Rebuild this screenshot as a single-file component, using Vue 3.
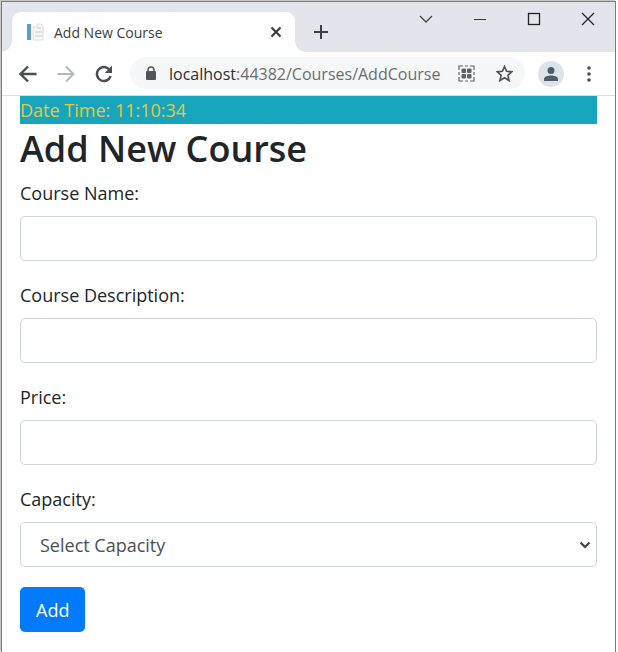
<template>
  <div class="desktop">
    <div class="window">
      <header class="tab-strip">
        <div class="tab">
          <svg class="favicon" width="20" height="18" viewBox="0 0 20 18">
            <rect x="1" y="1" width="4" height="16" fill="#5b9bd0" />
            <path d="M7 4h4V1h4l2 3v13H7z" fill="#f6f7f8" stroke="#dcdfe2" />
            <path d="M9 9h7M9 13h7M11 5h4" stroke="#c6cace" fill="none" />
          </svg>
          <span class="tab-title">Add New Course</span>
          <button class="icon-btn tab-close" type="button" aria-label="Close tab">
            <svg width="12" height="12" viewBox="0 0 12 12">
              <path d="M1.5 1.5l9 9M10.5 1.5l-9 9" stroke="#3c4043" stroke-width="2.2" />
            </svg>
          </button>
        </div>
        <button class="icon-btn new-tab" type="button" aria-label="New tab">
          <svg width="14" height="14" viewBox="0 0 14 14">
            <path d="M7 0v14M0 7h14" stroke="#3c4043" stroke-width="2" />
          </svg>
        </button>
        <div class="window-buttons">
          <button class="icon-btn" type="button" aria-label="Search tabs">
            <svg width="14" height="14" viewBox="0 0 14 14">
              <path d="M1 4l6 6 6-6" stroke="#444" stroke-width="1.3" fill="none" />
            </svg>
          </button>
          <button class="icon-btn" type="button" aria-label="Minimize">
            <svg width="14" height="14" viewBox="0 0 14 14">
              <path d="M1 7.5h12" stroke="#333" />
            </svg>
          </button>
          <button class="icon-btn" type="button" aria-label="Maximize">
            <svg width="14" height="14" viewBox="0 0 14 14">
              <rect x="1.5" y="1.5" width="11" height="11" stroke="#222" stroke-width="1.3" fill="none" />
            </svg>
          </button>
          <button class="icon-btn" type="button" aria-label="Close">
            <svg width="14" height="14" viewBox="0 0 14 14">
              <path d="M1 1l12 12M13 1L1 13" stroke="#222" stroke-width="1.2" />
            </svg>
          </button>
        </div>
      </header>

      <nav class="toolbar">
        <button class="icon-btn" type="button" aria-label="Back">
          <svg width="18" height="18" viewBox="0 0 18 18">
            <path d="M17.5 9H2M9 1.5L1.5 9 9 16.5" stroke="#4a4d51" stroke-width="2.4" fill="none" />
          </svg>
        </button>
        <button class="icon-btn" type="button" aria-label="Forward">
          <svg width="18" height="18" viewBox="0 0 18 18">
            <path d="M.5 9H16M9 1.5L16.5 9 9 16.5" stroke="#b5b8bb" stroke-width="2" fill="none" />
          </svg>
        </button>
        <button class="icon-btn" type="button" aria-label="Reload">
          <svg width="18" height="18" viewBox="0 0 18 18">
            <path d="M15.6 11.2A7 7 0 1 1 14 4.2" stroke="#4a4d51" stroke-width="2.5" fill="none" />
            <path d="M17 .8V8H9.8z" fill="#4a4d51" />
          </svg>
        </button>
        <div class="address-bar">
          <svg class="lock" width="12" height="15" viewBox="0 0 12 15">
            <rect x="1" y="5" width="10" height="9" rx="1" fill="#515458" />
            <path d="M3 6V4a3 3 0 0 1 6 0v2" stroke="#515458" stroke-width="1.5" fill="none" />
          </svg>
          <span class="url"><span class="host">localhost</span>:44382/Courses/AddCourse</span>
          <button class="icon-btn qr" type="button" aria-label="Create QR code">
            <svg width="17" height="17" viewBox="0 0 17 17">
              <path d="M1 5V1h4M12 1h4v4M16 12v4h-4M5 16H1v-4M7 1h3M7 16h3M1 7v3M16 7v3" stroke="#5f6368" stroke-width="1.2" fill="none" />
              <rect x="3.5" y="3.5" width="4.5" height="4.5" rx="1" fill="#5f6368" />
              <rect x="9" y="3.5" width="4.5" height="4.5" rx="1" fill="#5f6368" />
              <rect x="3.5" y="9" width="4.5" height="4.5" rx="1" fill="#5f6368" />
              <rect x="9" y="9" width="4.5" height="4.5" rx="1" fill="#5f6368" />
            </svg>
          </button>
          <button class="icon-btn" type="button" aria-label="Bookmark this page">
            <svg width="17" height="17" viewBox="0 0 17 17">
              <path d="M8.5 1.5l2.1 4.8 5.2.5-3.9 3.5 1.1 5.2-4.5-2.7L4 15.5l1.1-5.2L1.2 6.8l5.2-.5z" stroke="#515458" stroke-width="1.7" fill="none" />
            </svg>
          </button>
        </div>
        <button class="icon-btn avatar" type="button" aria-label="Profile">
          <svg width="16" height="16" viewBox="0 0 16 16">
            <circle cx="8" cy="4.5" r="3.5" fill="#4f5b6d" />
            <path d="M1 15v-2c0-2.5 4-3.5 7-3.5s7 1 7 3.5v2z" fill="#4f5b6d" />
          </svg>
        </button>
        <button class="icon-btn menu" type="button" aria-label="Menu">
          <svg width="4" height="16" viewBox="0 0 4 16">
            <circle cx="2" cy="2" r="1.8" fill="#4a4d51" />
            <circle cx="2" cy="8" r="1.8" fill="#4a4d51" />
            <circle cx="2" cy="14" r="1.8" fill="#4a4d51" />
          </svg>
        </button>
      </nav>

      <main class="page">
        <div class="clock">Date Time: {{ time }}</div>
        <h1>Add New Course</h1>
        <form @submit.prevent>
          <div v-for="field in fields" :key="field.id" class="form-group">
            <label :for="field.id">{{ field.label }}</label>
            <input :id="field.id" v-model="course[field.id]" class="form-control" type="text" />
          </div>
          <div class="form-group">
            <label for="capacity">Capacity:</label>
            <div class="select-wrap">
              <select id="capacity" v-model="course.capacity" class="form-control">
                <option value="">Select Capacity</option>
                <option v-for="n in capacities" :key="n" :value="n">{{ n }}</option>
              </select>
              <svg class="chevron" width="12" height="8" viewBox="0 0 12 8">
                <path d="M1.5 1.5L6 6l4.5-4.5" stroke="#40464c" stroke-width="2.2" fill="none" />
              </svg>
            </div>
          </div>
          <button class="btn-primary" type="submit">Add</button>
        </form>
      </main>
    </div>
  </div>
</template>

<script setup>
import { reactive, ref } from 'vue'

const time = ref('11:10:34')

const fields = [
  { id: 'name', label: 'Course Name:' },
  { id: 'description', label: 'Course Description:' },
  { id: 'price', label: 'Price:' }
]

const capacities = [10, 20, 30]

const course = reactive({
  name: '',
  description: '',
  price: '',
  capacity: ''
})
</script>

<style>
body {
  margin: 0;
  background: #fff;
}
</style>

<style scoped>
* {
  box-sizing: border-box;
}

.desktop {
  min-height: 100vh;
  padding-right: 2px;
  background: #fff;
  display: flex;
  font-family: "Segoe UI", "Open Sans", "Noto Sans", sans-serif;
  font-size: 18px;
  color: #212529;
}

.window {
  flex: 1;
  min-width: 0;
  margin: 1px 0 0 1px;
  background: #fff;
  border: 1px solid #7b7b7b;
  border-bottom: none;
  box-shadow: -1px -1px 0 #c8cac8;
}

.icon-btn {
  display: flex;
  align-items: center;
  justify-content: center;
  flex-shrink: 0;
  padding: 0;
  border: none;
  background: none;
  cursor: pointer;
}

/* tab strip */
.tab-strip {
  display: flex;
  height: 50px;
  padding: 10px 20px 0 10px;
  background: #e2e5eb;
}

.tab {
  position: relative;
  display: flex;
  align-items: center;
  width: 283px;
  padding: 0 13px 0 14px;
  background: #fff;
  border-radius: 9px 9px 0 0;
}

/* curved feet of the active tab */
.tab::before,
.tab::after {
  content: '';
  position: absolute;
  bottom: 0;
  width: 10px;
  height: 10px;
}

.tab::before {
  right: 100%;
  background: radial-gradient(circle at 0 0, transparent 9px, #fff 10px);
}

.tab::after {
  left: 100%;
  background: radial-gradient(circle at 100% 0, transparent 9px, #fff 10px);
}

.tab-title {
  flex: 1;
  margin-left: 8px;
  font-size: 14px;
  color: #3c4043;
}

.new-tab {
  width: 14px;
  margin-left: 19px;
}

.window-buttons {
  display: flex;
  align-items: flex-start;
  gap: 40px;
  margin-left: auto;
}

/* toolbar */
.toolbar {
  display: flex;
  align-items: center;
  height: 44px;
  padding: 0 24px 0 17px;
  gap: 20px;
  border-bottom: 1px solid #dcdee1;
}

.address-bar {
  flex: 1;
  min-width: 0;
  display: flex;
  align-items: center;
  height: 33px;
  margin-left: -3px;
  padding: 0 12px 0 15px;
  border-radius: 17px;
  background: #f6f7f9;
}

.url {
  flex: 1;
  margin-left: 12px;
  font-size: 16px;
  white-space: nowrap;
  color: #696d71;
}

.host {
  color: #2b2e31;
}

.qr {
  margin-right: 21px;
}

.avatar {
  width: 26px;
  height: 26px;
  margin: 0 3px 0 -7px;
  border-radius: 50%;
  background: #dee3eb;
}

/* page */
.page {
  padding: 0 18px;
}

.clock {
  background: #17a5bd;
  color: #e3c64b;
  line-height: 28px;
}

h1 {
  margin: 0 0 5px;
  font-size: 36px;
  font-weight: 600;
  line-height: 50px;
}

.form-group {
  margin-bottom: 20px;
}

label {
  display: block;
  margin-bottom: 9px;
  line-height: 28px;
}

.form-control {
  display: block;
  width: 100%;
  height: 45px;
  padding: 0 15px;
  border: 1px solid #ced4da;
  border-radius: 5px;
  background: #fff;
  font: inherit;
  color: #495057;
}

.select-wrap {
  position: relative;
}

select.form-control {
  appearance: none;
  padding-left: 19px;
}

.chevron {
  position: absolute;
  top: 19px;
  right: 6px;
  pointer-events: none;
}

.btn-primary {
  height: 45px;
  padding: 0 16px;
  border: none;
  border-radius: 5px;
  background: #007bff;
  color: #fff;
  font: inherit;
  cursor: pointer;
}
</style>
